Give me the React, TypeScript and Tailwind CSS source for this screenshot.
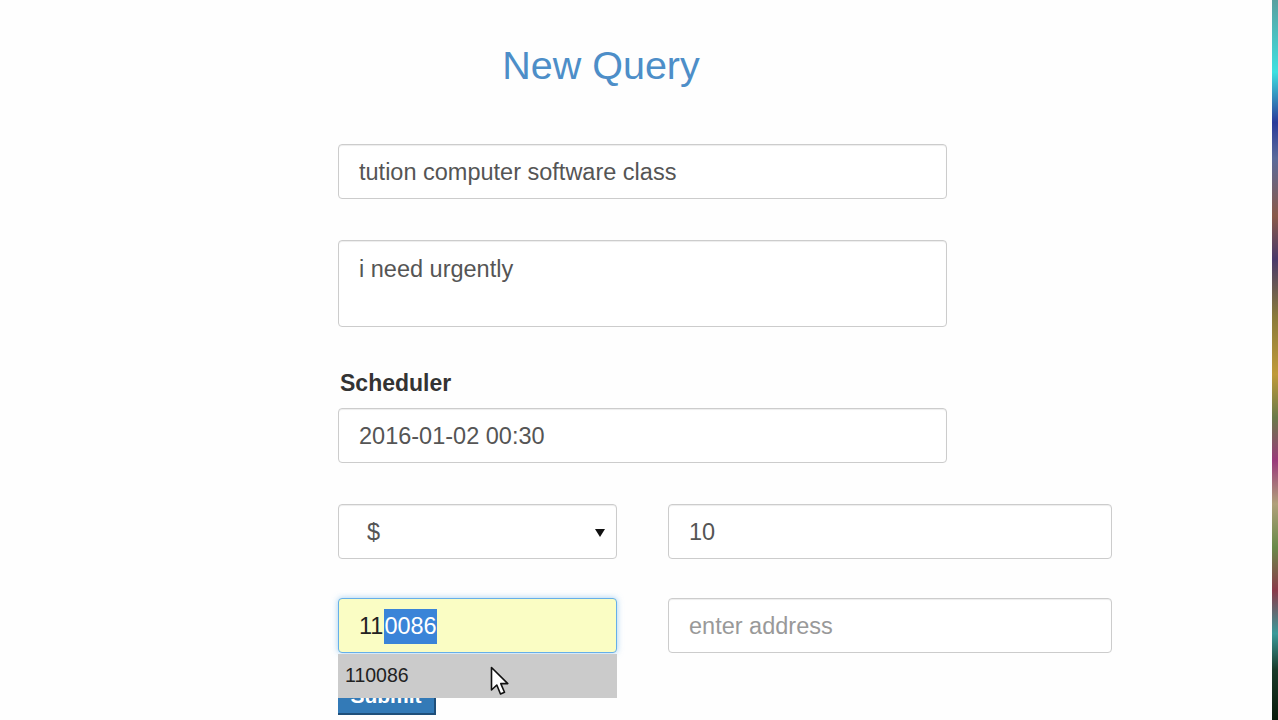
const field =
  'h-[55px] w-full rounded-[4px] border border-[#cccccc] bg-white px-5 pt-[3px] flex items-center text-[23.5px] text-[#555555] shadow-[inset_0_1px_1px_rgba(0,0,0,0.075)]'

function Cursor() {
  return (
    <svg width="22" height="32" viewBox="0 0 22 32" className="absolute z-20 left-[490px] top-[666px]">
      <path d="M1.5 1.5 L1.5 24 L6.8 19 L10.5 28 L14.5 26.3 L10.8 17.6 L17.8 17.6 Z" fill="#ffffff" stroke="#111111" strokeWidth="1.6" strokeLinejoin="round" />
    </svg>
  )
}

export default function App() {
  return (
    <div className="relative w-[1278px] h-[720px] overflow-hidden bg-[#fefefe]" style={{ fontFamily: '"Liberation Sans", Arial, sans-serif' }}>
      {/* noisy strip on the right edge */}
      <div className="absolute right-0 top-0 h-full w-[6px] bg-[linear-gradient(180deg,#5aa0a0_0%,#3ee0e0_10%,#2a3a9a_17%,#5a6a9a_22%,#8a5a4a_30%,#4a3a6a_36%,#8a7a3a_44%,#c09a3a_52%,#6a7a4a_58%,#9a3a7a_64%,#b0a07a_70%,#6a8a4a_76%,#8a3a4a_82%,#3a9a9a_88%,#1a3a2a_93%,#0a1a0a_100%)]" />

      <div className="ml-[338px] w-[774px] pt-[43px]">
        <div className="w-[526px] text-center text-[39.5px] leading-[44px] text-[#4d8ec8]">New Query</div>

        <div className="w-[609px] mt-[57px]">
          <div className={field}>tution computer software class</div>

          <div className="mt-[41px] h-[87px] w-full rounded-[4px] border border-[#cccccc] bg-white px-5 pt-[11px] text-[23.5px] text-[#555555] shadow-[inset_0_1px_1px_rgba(0,0,0,0.075)]">
            i need urgently
          </div>

          <div className="mt-[43px] ml-[2px] text-[23px] font-bold leading-[26px] text-[#333333]">Scheduler</div>

          <div className={`${field} mt-[12px]`}>2016-01-02 00:30</div>
        </div>

        <div className="mt-[41px] flex gap-[51px]">
          <div className={`${field} !w-[279px] justify-between pr-[11px]`}>
            <span className="pl-[8px]">$</span>
            <svg width="10" height="8" viewBox="0 0 10 8">
              <path d="M0 0 H10 L5 8 Z" fill="#111111" />
            </svg>
          </div>
          <div className={`${field} !w-[444px]`}>10</div>
        </div>

        <div className="mt-[39px] flex gap-[51px]">
          <div className="relative w-[279px]">
            <div className="h-[55px] w-full rounded-[4px] border border-[#66afe9] bg-[#fafdc4] px-5 pt-[2px] flex items-center text-[23.5px] text-[#222222] shadow-[0_0_6px_rgba(102,175,233,0.6)]">
              <span className="pr-[1px]">11</span>
              <span className="bg-[#3a84d8] text-white">0086</span>
            </div>
            <div className="relative z-10 mt-[1px] h-[44px] w-full bg-[#cbcbcb] pl-[7px] flex items-center text-[19.5px] text-[#222222]">110086</div>
            <div className="-mt-[17px] h-[34px] w-[98px] bg-[#337ab7] border-r-2 border-b-2 border-[#1f4f7a] text-white text-[21px] leading-[30px] font-bold text-center">Submit</div>
          </div>
          <div className={`${field} !w-[444px] text-[#999999]`}>enter address</div>
        </div>
      </div>

      <Cursor />
    </div>
  )
}
